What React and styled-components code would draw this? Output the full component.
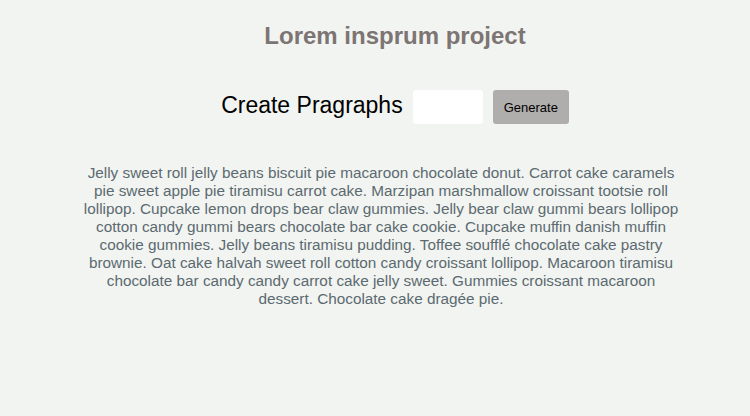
import React, { useState } from 'react';
import styled, { createGlobalStyle } from 'styled-components';

const GlobalStyle = createGlobalStyle`
    body {
        margin: 0;
        background-color: #f2f4f1;
        font-family: "Liberation Sans", Arial, sans-serif;
    }
`;

const Page = styled.div`
    display: flex;
    flex-direction: column;
    align-items: center;
    padding-top: 22px;
`;

const Header = styled.header`
    display: flex;
    flex-direction: column;
    align-items: center;
    padding-left: 40px;
`;

const Title = styled.h1`
    font-size: 24px;
    font-weight: bold;
    color: #7d7573;
    margin: 0;
`;

const GenerateForm = styled.form`
    display: flex;
    align-items: center;
    gap: 10px;
    margin-top: 40px;
`;

const FormLabel = styled.label`
    font-size: 23px;
    color: #000;
    margin-top: -4px;
`;

const CountInput = styled.input`
    width: 70px;
    height: 34px;
    box-sizing: border-box;
    border: none;
    border-radius: 3px;
    background-color: #fff;
    font-size: 14px;
    padding: 0 6px;
`;

const GenerateBtn = styled.button`
    height: 34px;
    padding: 0 11px;
    font-size: 13px;
    font-family: "Liberation Sans", Arial, sans-serif;
    color: #000;
    background-color: #b0adad;
    border: none;
    border-radius: 3px;
    cursor: pointer;
`;

const TextBlock = styled.p`
    width: 80%;
    margin: 40px 0 0 12px;
    text-align: center;
    font-size: 15.3px;
    line-height: 18px;
    color: #5b6a70;
`;

const loremText = 'Jelly sweet roll jelly beans biscuit pie macaroon chocolate donut. Carrot cake caramels pie sweet apple pie tiramisu carrot cake. Marzipan marshmallow croissant tootsie roll lollipop. Cupcake lemon drops bear claw gummies. Jelly bear claw gummi bears lollipop cotton candy gummi bears chocolate bar cake cookie. Cupcake muffin danish muffin cookie gummies. Jelly beans tiramisu pudding. Toffee soufflé chocolate cake pastry brownie. Oat cake halvah sweet roll cotton candy croissant lollipop. Macaroon tiramisu chocolate bar candy candy carrot cake jelly sweet. Gummies croissant macaroon dessert. Chocolate cake dragée pie.';

export default function App() {
    const [count, setCount] = useState('');

    return (<>
        <GlobalStyle />
        <Page>
            <Header>
                <Title>Lorem insprum project</Title>
                <GenerateForm onSubmit={e => e.preventDefault()}>
                    <FormLabel htmlFor='amount'>Create Pragraphs</FormLabel>
                    <CountInput id='amount' type='number' value={count} onChange={e => setCount(e.target.value)} />
                    <GenerateBtn type='submit'>Generate</GenerateBtn>
                </GenerateForm>
            </Header>
            <TextBlock>{loremText}</TextBlock>
        </Page>
    </>);
}
